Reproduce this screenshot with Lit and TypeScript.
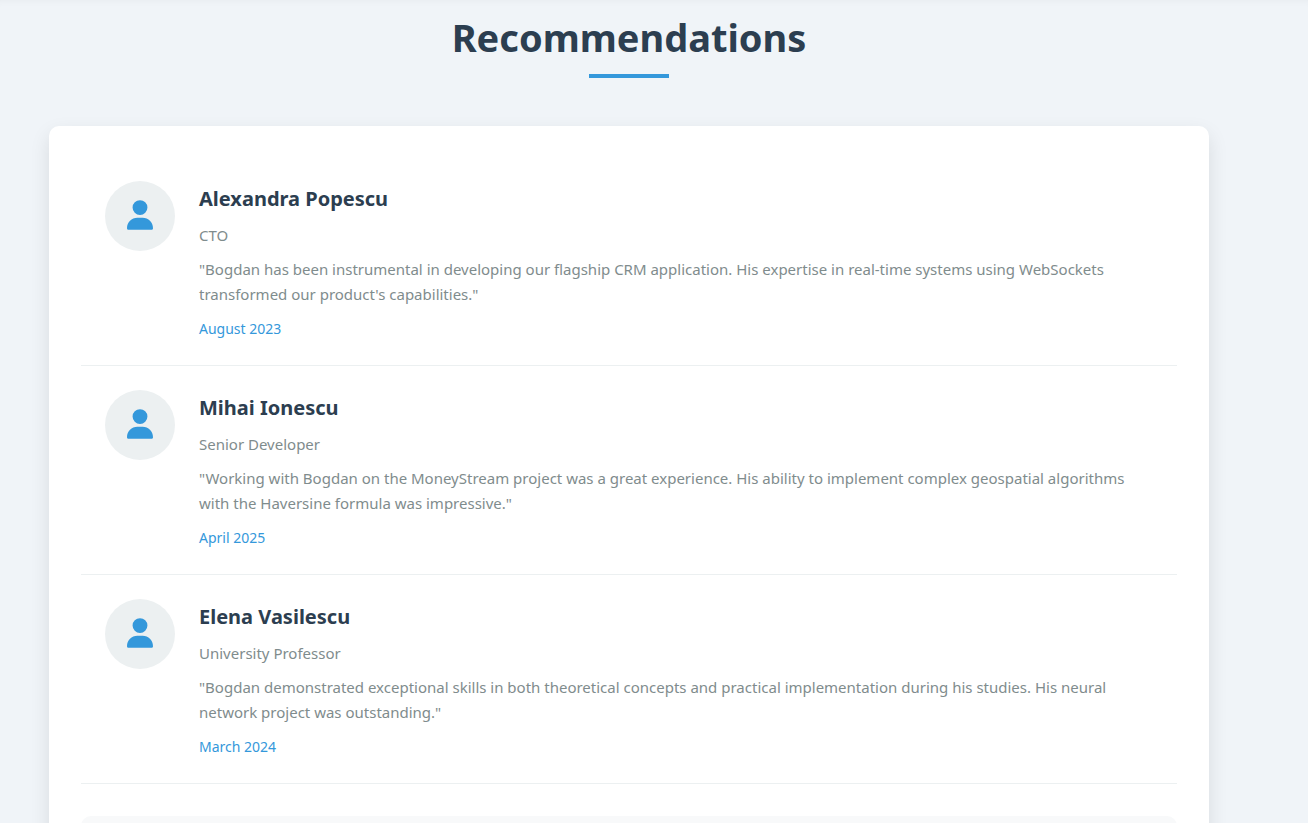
import { LitElement, html, css } from "lit";
import { customElement, property } from "lit/decorators.js";

interface Recommendation {
  name: string;
  role: string;
  quote: string;
  date: string;
}

const recommendations: Recommendation[] = [
  {
    name: "Alexandra Popescu",
    role: "CTO",
    quote:
      "Bogdan has been instrumental in developing our flagship CRM application. His expertise in real-time systems using WebSockets transformed our product's capabilities.",
    date: "August 2023",
  },
  {
    name: "Mihai Ionescu",
    role: "Senior Developer",
    quote:
      "Working with Bogdan on the MoneyStream project was a great experience. His ability to implement complex geospatial algorithms with the Haversine formula was impressive.",
    date: "April 2025",
  },
  {
    name: "Elena Vasilescu",
    role: "University Professor",
    quote:
      "Bogdan demonstrated exceptional skills in both theoretical concepts and practical implementation during his studies. His neural network project was outstanding.",
    date: "March 2024",
  },
];

@customElement("recommendation-item")
export class RecommendationItem extends LitElement {
  @property({ attribute: false }) item!: Recommendation;

  static styles = css`
    :host {
      display: flex;
      gap: 24px;
      padding: 24px;
      border-bottom: 1px solid #ecf0f1;
    }
    .avatar {
      display: flex;
      flex: none;
      align-items: center;
      justify-content: center;
      box-sizing: border-box;
      width: 70px;
      height: 70px;
      padding-bottom: 2px;
      border-radius: 50%;
      background: #ecf0f1;
      color: #3498db;
    }
    .icon {
      width: 26px;
      height: 30px;
      fill: currentColor;
    }
    .content {
      flex: 1;
      min-width: 0;
    }
    .name {
      margin: 0 0 6px;
      font-size: 20px;
      line-height: 36px;
      font-weight: 700;
      color: #2c3e50;
    }
    .role,
    .quote {
      margin: 0 0 9px;
      font-size: 15px;
      line-height: 25px;
      color: #7f8c8d;
    }
    .date {
      display: block;
      font-size: 14px;
      line-height: 25px;
      color: #3498db;
    }
  `;

  render() {
    return html`
      <div class="avatar">
        <svg class="icon" viewBox="0 0 448 512" aria-hidden="true">
          <path
            d="M224 256a128 128 0 1 0 0-256 128 128 0 1 0 0 256zm-45.700 48C79.800 304 0 383.800 0 482.300 0 498.700 13.300 512 29.700 512h388.600c16.400 0 29.700-13.300 29.700-29.700C448 383.800 368.200 304 269.700 304z"
          />
        </svg>
      </div>
      <div class="content">
        <h3 class="name">${this.item.name}</h3>
        <p class="role">${this.item.role}</p>
        <p class="quote">${`"${this.item.quote}"`}</p>
        <time class="date">${this.item.date}</time>
      </div>
    `;
  }
}

@customElement("app-root")
export class AppRoot extends LitElement {
  static styles = css`
    :host {
      display: block;
      box-sizing: border-box;
      height: 100vh;
      overflow: hidden;
      padding: 8px 99px 0 49px;
      background: #f0f4f8;
      box-shadow: inset 0 8px 8px -8px rgba(0, 0, 0, 0.05);
      font-family: "Segoe UI", "Noto Sans", "Open Sans", sans-serif;
    }
    .page {
      max-width: 1160px;
      margin: 0 auto;
    }
    .title {
      display: flex;
      flex-direction: column;
      align-items: center;
      gap: 8px;
      margin: 0 0 48px;
      font-size: 38px;
      line-height: 58px;
      font-weight: 700;
      color: #2c3e50;
    }
    .title::after {
      content: "";
      width: 80px;
      height: 4px;
      background: #3498db;
    }
    .card {
      padding: 31px 32px 32px;
      border-radius: 10px;
      background: #fff;
      box-shadow: 0 8px 20px rgba(0, 0, 0, 0.1);
    }
    .panel {
      height: 160px;
      margin-top: 32px;
      border-radius: 10px;
      background: #f8f9fa;
    }
  `;

  render() {
    return html`
      <main class="page">
        <h2 class="title">Recommendations</h2>
        <section class="card">
          ${recommendations.map(
            (item) => html`<recommendation-item .item=${item}></recommendation-item>`
          )}
          <div class="panel"></div>
        </section>
      </main>
    `;
  }
}
